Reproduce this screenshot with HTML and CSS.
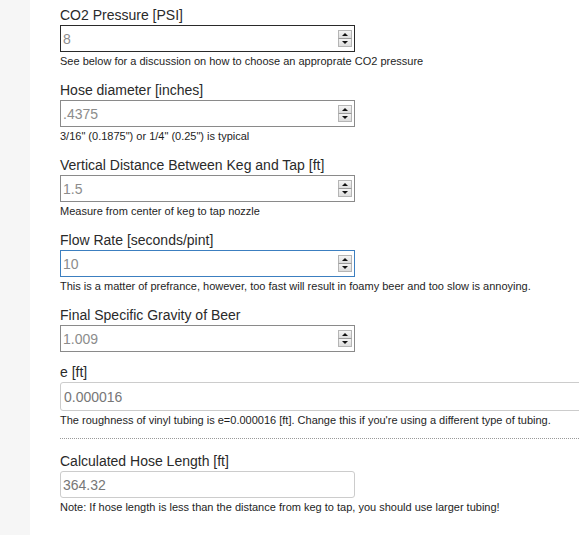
FILE: index.html
```html
<!DOCTYPE html>
<html>
<head>
<meta charset="utf-8">
<link rel="stylesheet" href="styles.css">
</head>
<body>
<div class="page">
  <aside class="sidebar"></aside>
  <main class="content">
    <div class="group">
      <label class="label">CO2 Pressure [PSI]</label>
      <div class="field field--dark">
        <input class="input" type="text" value="8">
        <span class="spin"><span class="spin-btn spin-up"></span><span class="spin-btn spin-down"></span></span>
      </div>
      <p class="help">See below for a discussion on how to choose an approprate CO2 pressure</p>
    </div>
    <div class="group">
      <label class="label">Hose diameter [inches]</label>
      <div class="field">
        <input class="input" type="text" value=".4375">
        <span class="spin"><span class="spin-btn spin-up"></span><span class="spin-btn spin-down"></span></span>
      </div>
      <p class="help">3/16" (0.1875") or 1/4" (0.25") is typical</p>
    </div>
    <div class="group">
      <label class="label">Vertical Distance Between Keg and Tap [ft]</label>
      <div class="field">
        <input class="input" type="text" value="1.5">
        <span class="spin"><span class="spin-btn spin-up"></span><span class="spin-btn spin-down"></span></span>
      </div>
      <p class="help">Measure from center of keg to tap nozzle</p>
    </div>
    <div class="group">
      <label class="label">Flow Rate [seconds/pint]</label>
      <div class="field field--focus">
        <input class="input" type="text" value="10">
        <span class="spin"><span class="spin-btn spin-up"></span><span class="spin-btn spin-down"></span></span>
      </div>
      <p class="help">This is a matter of prefrance, however, too fast will result in foamy beer and too slow is annoying.</p>
    </div>
    <div class="group group--nohelp">
      <label class="label">Final Specific Gravity of Beer</label>
      <div class="field">
        <input class="input" type="text" value="1.009">
        <span class="spin"><span class="spin-btn spin-up"></span><span class="spin-btn spin-down"></span></span>
      </div>
    </div>
    <div class="group group--last">
      <label class="label">e [ft]</label>
      <div class="field field--round field--wide">
        <input class="input input--wide" type="text" value="0.000016">
      </div>
      <p class="help">The roughness of vinyl tubing is e=0.000016 [ft]. Change this if you're using a different type of tubing.</p>
    </div>
    <hr class="divider">
    <div class="group">
      <label class="label">Calculated Hose Length [ft]</label>
      <div class="field field--round">
        <input class="input" type="text" value="364.32" readonly>
      </div>
      <p class="help">Note: If hose length is less than the distance from keg to tap, you should use larger tubing!</p>
    </div>
  </main>
</div>
</body>
</html>
```
FILE: styles.css
```css
html, body {
  margin: 0;
  padding: 0;
  background: #fff;
  overflow: hidden;
}
body {
  font-family: "Liberation Sans", Arial, sans-serif;
  color: #222;
  width: 579px;
  height: 535px;
}
.page {
  display: flex;
  min-height: 535px;
}
.sidebar {
  flex: 0 0 30px;
  background: #f6f6f6;
}
.content {
  flex: 0 0 540px;
  padding: 4px 0 0 30px;
  box-sizing: border-box;
}
.group {
  margin-bottom: 11px;
}
.group--nohelp {
  margin-bottom: 9px;
}
.group--last {
  margin-bottom: 0;
}
.label {
  display: block;
  font-size: 14px;
  line-height: 17px;
  padding-top: 3px;
  margin-bottom: 1px;
  color: #2a2a2a;
}
.field {
  position: relative;
  width: 295px;
  height: 27px;
  box-sizing: border-box;
  border: 1px solid #8a8a8a;
  background: #fff;
}
.field--dark {
  border-color: #2a2a2a;
}
.field--focus {
  border-color: #3c7fc0;
}
.field--round {
  border-color: #ccc;
  border-radius: 3px;
}
.field--wide {
  width: 540px;
  height: 29px;
}
.input {
  display: block;
  width: 100%;
  height: 100%;
  box-sizing: border-box;
  border: 0;
  outline: none;
  padding: 1px 0 0 2px;
  margin: 0;
  background: transparent;
  font-family: "Liberation Sans", Arial, sans-serif;
  font-size: 14px;
  color: #8c8c8c;
}
.input--wide {
  padding-left: 3px;
  color: #777;
}
.field--round .input {
  color: #777;
}
.spin {
  position: absolute;
  right: 2px;
  top: 4px;
  width: 14px;
  height: 17px;
  display: flex;
  flex-direction: column;
}
.spin-btn {
  position: relative;
  flex: 1 1 0;
  box-sizing: border-box;
  border: 1px solid #b5b5b5;
  background: linear-gradient(#f4f4f4, #dcdcdc);
}
.spin-up {
  border-bottom-color: #9a9a9a;
}
.spin-down {
  border-top: 0;
}
.spin-btn::after {
  content: "";
  position: absolute;
  left: 3px;
  width: 0;
  height: 0;
  border-left: 3px solid transparent;
  border-right: 3px solid transparent;
}
.spin-up::after {
  top: 2px;
  border-bottom: 3px solid #111;
}
.spin-down::after {
  top: 2px;
  border-top: 3px solid #111;
}
.help {
  margin: 2px 0 0;
  font-size: 11px;
  line-height: 14px;
  color: #1e1e1e;
  white-space: nowrap;
}
.divider {
  margin: 11px 0 11px;
  border: 0;
  border-top: 1px dotted #999;
  height: 0;
  width: 519px;
}
```
